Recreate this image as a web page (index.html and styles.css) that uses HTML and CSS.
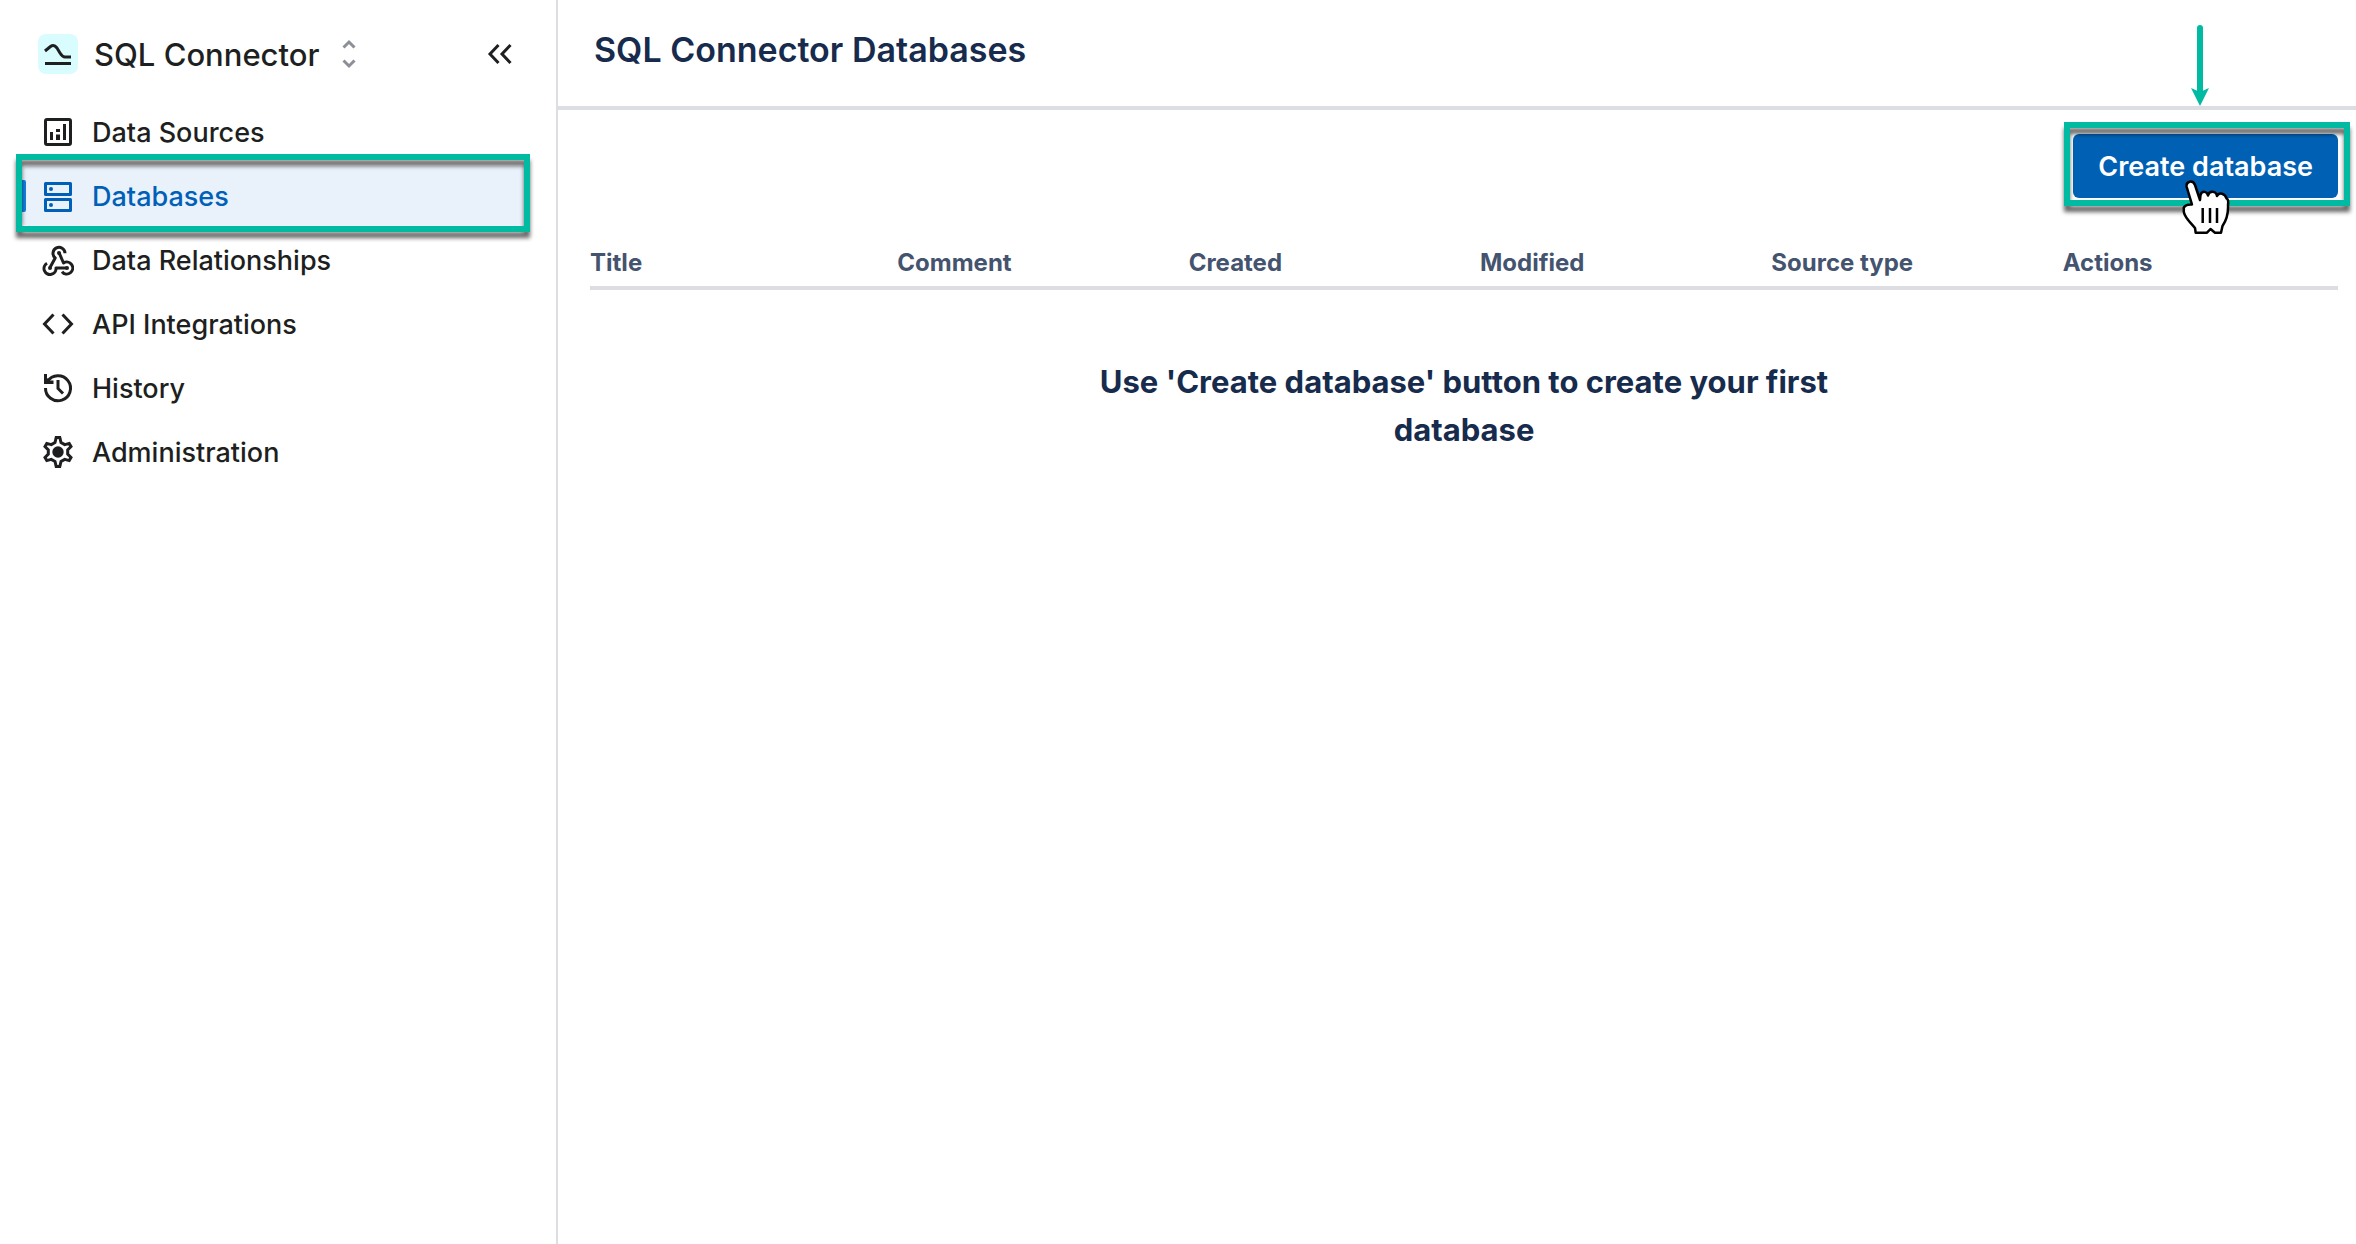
FILE: index.html
```html
<!DOCTYPE html>
<html lang="en">
<head>
<meta charset="utf-8">
<meta name="viewport" content="width=device-width, initial-scale=1">
<title>SQL Connector Databases</title>
<link rel="stylesheet" href="styles.css">
</head>
<body>
<div class="app">
  <aside class="sidebar">
    <div class="brand">
      <button class="switcher" type="button">
        <span class="logo"><svg viewBox="0 0 40 40" width="40" height="40"><path d="M7 17 12.500 12.500Q16 10 19 14L22 19Q24.500 23 27 23H33M7 29.500H33" fill="none" stroke="currentColor" stroke-width="3"/></svg></span>
        <span class="brand-name">SQL Connector</span>
        <svg class="updown" viewBox="0 0 16 32" width="16" height="32"><path d="M2.500 9.500 8 4 13.500 9.500M2.500 22.500 8 28 13.500 22.500" fill="none" stroke="currentColor" stroke-width="3"/></svg>
      </button>
      <button class="collapse" type="button" aria-label="Collapse sidebar"><svg viewBox="0 0 28 28" width="28" height="28"><path d="M12.500 5 4 14 12.500 23M24.500 5 16 14 24.500 23" fill="none" stroke="currentColor" stroke-width="3"/></svg></button>
    </div>
    <nav class="nav">
      <a class="item" href="#sources"><svg class="icon" viewBox="0 0 32 32"><rect x="3.500" y="3.500" width="25" height="25" rx="1.500" fill="none" stroke="currentColor" stroke-width="3"/><path d="M8 16h3v8H8zM14 13h4v3h-4zM14 18.500h4V24h-4zM21 8h3v16h-3z" fill="currentColor"/></svg>Data Sources</a>
      <a class="item selected" href="#databases" aria-current="page"><svg class="icon" viewBox="0 0 32 32"><path d="M3.500 3.500h25v11h-25zM3.500 19.500h25v11h-25z" fill="none" stroke="currentColor" stroke-width="3" stroke-linejoin="round"/><circle cx="9" cy="9" r="2" fill="currentColor"/><circle cx="9" cy="25" r="2" fill="currentColor"/></svg>Databases</a>
      <a class="item" href="#relationships"><svg class="icon" viewBox="0 0 32 32"><g fill="none" stroke="currentColor" stroke-width="3" stroke-linejoin="round"><path d="M23 9.300A6 6 0 1 0 13.200 14L8 23.500"/><path d="M5 19.300A6 6 0 1 0 14 24H25"/><path d="M17 8.500 21.500 19A6 6 0 1 1 20 27.800"/></g><g fill="currentColor"><circle cx="17" cy="9" r="2"/><circle cx="8" cy="24" r="2"/><circle cx="25" cy="24" r="2"/></g></svg>Data Relationships</a>
      <a class="item" href="#api"><svg class="icon" viewBox="0 0 32 32"><path d="M11.500 6.500 2.500 16 11.500 25.500M20.500 6.500 29.500 16 20.500 25.500" fill="none" stroke="currentColor" stroke-width="3"/></svg>API Integrations</a>
      <a class="item" href="#history"><svg class="icon" viewBox="0 0 32 32"><path d="M5.500 9.500A12.500 12.500 0 1 1 3.500 16M16 8V16.500L21 21.500" fill="none" stroke="currentColor" stroke-width="3"/><path d="M2 2h3v4l3 2.500h3.500V12H2z" fill="currentColor"/></svg>History</a>
      <a class="item" href="#administration"><svg class="icon" viewBox="0 0 32 32"><path d="M14.200 1.500H17.800L19 6.500 22.700 8.650 27.200 7.400 29 10.600 25.700 13.850V18.150L29 21.400 27.200 24.600 22.700 23.350 19 25.500 17.800 30.500H14.200L13 25.500 9.300 23.350 4.800 24.600 3 21.400 6.300 18.150V13.850L3 10.600 4.800 7.400 9.300 8.650 13 6.500z" fill="none" stroke="currentColor" stroke-width="3"/><circle cx="16" cy="16" r="5.700" fill="currentColor"/></svg>Administration</a>
    </nav>
  </aside>
  <main class="main">
    <header class="header"><h1>SQL Connector Databases</h1></header>
    <div class="content">
      <div class="toolbar">
        <div class="action">
          <button class="create" type="button">Create database</button>
          <svg class="arrow" viewBox="0 0 20 82" width="20" height="82" aria-hidden="true"><path d="M10 4V68" stroke="currentColor" stroke-width="6" stroke-linecap="round"/><path d="M1 64 10 68 19 64 10 82z" fill="currentColor"/></svg>
          <svg class="pointer" viewBox="0 0 50 56" width="50" height="56" aria-hidden="true"><path d="M4.700 7C3.500 1 11 -.5 13 5L18 20 18.500 15C20 10.500 25 11 26 15.500 27 10.500 34 10.500 35 16 37 12 43 13 44.500 18.500 46.500 19 46.500 21 46 25 46.500 36 44 41 40.500 46L39 52.700H33L28.500 49 25 52.700H13.700L13 48C8 42 3 38 1.800 32V27.500Q4 24 10 24.500Z" fill="#fff" stroke="#000" stroke-width="2.500" stroke-linejoin="round"/><path d="M20.700 28V43M28 28V43M35 28V43" stroke="#000" stroke-width="2.500"/></svg>
        </div>
      </div>
      <table class="table">
        <thead><tr><th scope="col">Title</th><th scope="col">Comment</th><th scope="col">Created</th><th scope="col">Modified</th><th scope="col">Source type</th><th scope="col">Actions</th></tr></thead>
      </table>
      <p class="empty">Use 'Create database' button to create your first database</p>
    </div>
  </main>
</div>
</body>
</html>
```
FILE: styles.css
```css
*{box-sizing:border-box}
body{margin:0;background:#fff;color:#1e1f21;font-family:Inter,"Liberation Sans",sans-serif;font-size:27px}
button{border:0;background:none;padding:0;font:inherit;color:inherit;cursor:pointer}
svg{display:block;flex:none}
.app{display:grid;grid-template-columns:558px 1fr;min-height:100vh}
.sidebar{border-right:2px solid #dddee1;padding:34px 26px 24px 22px}
.brand{display:flex;align-items:center;justify-content:space-between;height:40px;padding:0 16px;margin-bottom:28px}
.switcher{display:flex;align-items:center;gap:16px;font-size:31px;font-weight:500}
.logo{background:#d9fcff;border-radius:8px}
.updown{color:#8c8f97;margin-left:6px}
.nav{display:grid;gap:4px}
.item{display:flex;align-items:center;gap:18px;height:60px;padding-left:20px;border-radius:6px;color:inherit;text-decoration:none;font-weight:500}
.icon{width:32px;height:32px}
.selected{position:relative;background:#e9f2fb;color:#0060b8}
.selected::before{content:"";position:absolute;left:0;top:14px;width:4px;height:32px;border-radius:0 2px 2px 0;background:#1281e2}
.selected::after,.action::after{content:"";position:absolute;border:6px solid #00bba2;filter:drop-shadow(0 6px 2px rgba(0,0,0,.6));pointer-events:none}
.selected::after{inset:-12px 0 -6px -6px}
.header{height:110px;padding:0 36px;border-bottom:4px solid #dddee4;display:flex;align-items:center;color:#172b4d}
h1{margin:0 0 6px;font-size:34px;line-height:44px;font-weight:600}
.content{padding:24px 18px 32px 32px}
.toolbar{display:flex;justify-content:flex-end}
.action{position:relative}
.action::after{inset:-12px -12px -8px -9px}
.create{display:block;height:64px;padding:0 25px;border-radius:6px;background:#0060b4;color:#fff;font-weight:600}
.arrow{position:absolute;right:128px;top:-110px;color:#00bba2}
.pointer{position:absolute;right:106px;top:46px;z-index:1}
.table{width:100%;margin-top:36px;border-collapse:collapse;table-layout:fixed;border-bottom:4px solid #dddee4;color:#44546f}
th{padding:13px 16px 7px;text-align:left;font-size:24px;line-height:32px;font-weight:700}
th:first-child{padding-left:0}
.empty{max-width:800px;margin:68px auto 0;text-align:center;font-size:31px;line-height:48px;font-weight:700;color:#172b4d}
```
